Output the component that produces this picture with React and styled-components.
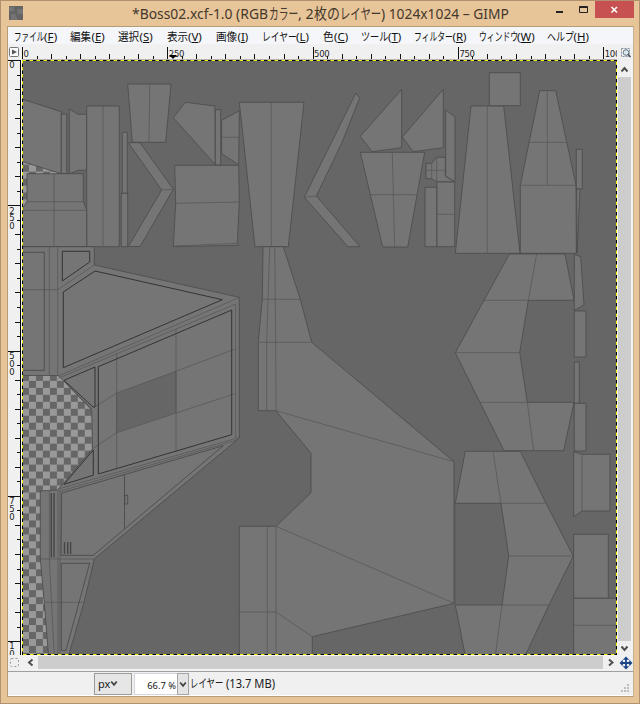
import React from "react";
import styled, { createGlobalStyle } from "styled-components";

const GlobalStyle = createGlobalStyle`
  * { box-sizing: border-box; }
  body { margin: 0; background: #e8c499; }
`;

const font = `"Noto Sans", "Noto Sans CJK JP", sans-serif`;

const Window = styled.div`
  width: 640px;
  height: 704px;
  display: flex;
  flex-direction: column;
  background: #e8c499;
  border: 1px solid #b0936e;
  padding: 0 6px 6px 6px;
  font-family: ${font};
  overflow: hidden;
`;

const TitleBar = styled.header`
  height: 25px;
  flex: none;
  display: flex;
  align-items: flex-start;
  color: #43382c;
`;

const AppIcon = styled.svg`
  width: 14px;
  height: 14px;
  margin: 5px 0 0 2px;
  flex: none;
`;

const Title = styled.h1`
  margin: 0 0 0 109px;
  width: 424px;
  height: 25px;
  flex: none;
  font-size: 15px;
  font-weight: 400;
  line-height: 25px;
  white-space: pre;
  display: flex;
`;

const SqueezeBox = styled.span`
  display: inline-block;
  width: ${(p) => p.$w}px;
  flex: none;
  white-space: pre;
`;

const SqueezeText = styled.span`
  display: inline-block;
  transform: scaleX(${(p) => p.$scale});
  transform-origin: 0 50%;
`;

function Squeeze({ w, scale, children }) {
  return (
    <SqueezeBox $w={w}>
      <SqueezeText $scale={scale}>{children}</SqueezeText>
    </SqueezeBox>
  );
}

const Controls = styled.div`
  display: flex;
  flex: none;
  height: 18px;
  margin-left: -13px;
`;

const Control = styled.button`
  border: 0;
  padding: 0;
  width: ${(p) => (p.$close ? 39 : 26)}px;
  height: ${(p) => (p.$close ? 17 : 18)}px;
  background: ${(p) => (p.$close ? "#c75050" : "transparent")};
  svg { display: block; width: 100%; height: 100%; }
`;

const Client = styled.main`
  flex: none;
  width: 627px;
  height: 671px;
  border: 1px solid #b79c78;
  border-right-color: #c9b190;
  background: #f0f0f0;
  display: flex;
  flex-direction: column;
`;

const MenuBar = styled.nav`
  height: 17px;
  flex: none;
  display: flex;
  padding-left: 6px;
  background: #f5f6f9;
  color: #111;
  font-size: 11.5px;
  line-height: 19px;
`;

const MenuItem = styled.span`
  display: flex;
  flex: none;
  width: ${(p) => p.$w}px;
  white-space: nowrap;
  u { text-underline-offset: 1px; }
`;

const Workspace = styled.section`
  flex: none;
  display: grid;
  grid-template-columns: 14px 595px 16px;
  grid-template-rows: 16px 595px 15px;
  svg { display: block; }
`;

const Drawing = styled.svg`
  width: ${(p) => p.width}px;
  height: ${(p) => p.height}px;
  text { font-family: "DejaVu Sans", sans-serif; font-size: 8.5px; fill: #222; }
`;

const ScrollBar = styled.div`
  display: flex;
  flex-direction: ${(p) => (p.$vertical ? "column" : "row")};
  padding: ${(p) => (p.$vertical ? "0 2px 0 1px" : "1px 0")};
  background: #f4f4f4;
`;

const Thumb = styled.div`
  flex: 1;
  background: #cdcdcd;
`;

const Arrow = styled.svg`
  flex: none;
  width: ${(p) => (p.$vertical ? 13 : p.$w)}px;
  height: ${(p) => (p.$vertical ? p.$w : 13)}px;
  background: #f0f0f0;
`;

const StatusBar = styled.footer`
  flex: 1;
  display: flex;
  align-items: flex-start;
  position: relative;
  margin-top: 1px;
  border-top: 1px solid #a0a0a0;
  border-bottom: 1px solid #fff;
  padding: 1px 0 0 86px;
  color: #202020;
  font-size: 12px;
`;

const UnitSelect = styled.div`
  width: 38px;
  height: 22px;
  border: 1px solid #9b9b9b;
  background: #e6e6e6;
  padding-left: 3px;
  display: flex;
  align-items: center;
  font-size: 11px;
  line-height: 18px;
  svg { margin-bottom: 1px; }
`;

const ZoomField = styled.div`
  width: 43px;
  height: 22px;
  margin-left: 2px;
  background: #fff;
  border: 1px solid #d4d7de;
  border-right: 0;
  text-align: right;
  line-height: 23px;
  font-size: 9.4px;
  padding-right: 1px;
  white-space: pre;
`;

const ZoomButton = styled.div`
  width: 12px;
  height: 22px;
  border: 1px solid #a5a5a5;
  background: #e4e4e4;
  display: flex;
  align-items: center;
  justify-content: center;
`;

const StatusText = styled.div`
  display: flex;
  margin-left: 1px;
  line-height: 21px;
`;

const Grip = styled.svg`
  position: absolute;
  right: 2px;
  bottom: 2px;
`;

const menus = [
  { kana: "ファイル", kw: 30, scale: 0.66, key: "F", w: 56 },
  { kana: "編集", kw: 21.5, scale: 0.92, key: "E", w: 48 },
  { kana: "選択", kw: 21.5, scale: 0.92, key: "S", w: 49 },
  { kana: "表示", kw: 21, scale: 0.92, key: "V", w: 49 },
  { kana: "画像", kw: 21.5, scale: 0.92, key: "I", w: 46 },
  { kana: "レイヤー", kw: 34, scale: 0.76, key: "L", w: 61 },
  { kana: "色", kw: 11, scale: 0.92, key: "C", w: 38 },
  { kana: "ツール", kw: 27, scale: 0.79, key: "T", w: 53 },
  { kana: "フィルター", kw: 38.5, scale: 0.68, key: "R", w: 65 },
  { kana: "ウィンドウ", kw: 38, scale: 0.68, key: "W", w: 68 },
  { kana: "ヘルプ", kw: 26.5, scale: 0.78, key: "H", w: 60 },
];

const STEP = 14.53;
const tickIndexes = Array.from({ length: 41 }, (_, i) => i);
const tickLength = (i) => (i % 10 === 0 ? 12 : i % 2 === 0 ? 5 : 3);

function TopRuler() {
  return (
    <Drawing width={595} height={16} viewBox="0 0 595 16">
      <rect width="595" height="16" fill="#f0f0f0" />
      <rect y="15" width="595" height="1" fill="#b5b5b5" />
      {tickIndexes.map((i) => (
        <rect key={i} x={Math.round(i * STEP)} y={15 - tickLength(i)} width="1" height={tickLength(i)} fill="#111" />
      ))}
      {["0", "250", "500", "750", "1000"].map((t, i) => (
        <text key={t} x={i * STEP * 10 + 1.5} y="12.8" letterSpacing="-0.3">{t}</text>
      ))}
      <path d="M147 11h8l-4 4z" fill="#000" />
    </Drawing>
  );
}

function LeftRuler() {
  return (
    <Drawing width={14} height={595} viewBox="0 0 14 595">
      <rect width="14" height="595" fill="#f0f0f0" />
      <rect x="12" width="1" height="595" fill="#000" />
      {tickIndexes.map((i) => (
        <rect key={i} x={12 - tickLength(i)} y={Math.round(i * STEP)} width={tickLength(i)} height="1" fill="#111" />
      ))}
      {["0", "250", "500", "750", "10"].map((t, i) => (
        <text key={t}>
          {t.split("").map((d, j) => (
            <tspan key={j} x="1.3" y={i * STEP * 10 + 8.2 + j * 7.9}>{d}</tspan>
          ))}
        </text>
      ))}
    </Drawing>
  );
}

const r = (x1, y1, x2, y2) => `${x1},${y1} ${x2},${y1} ${x2},${y2} ${x1},${y2}`;

const checkers = [
  "22,161 62,173.7 27,175 27,202 22,210",
  "22,375 60,375 92,410 92.7,449 58,490 40.5,491 40.5,559 49,656 22,656",
];

const faces = [
  "22,99 61.3,111.7 61.3,173.7 22,161.5",
  r(61.3, 114, 66.7, 173.7),
  "69.3,109 78,114.3 86.7,114.3 86.7,170.3 78,170.3 69.3,173.7",
  r(86.7, 106, 119.3, 246.7),
  "27,173.7 83.3,173.7 83.3,201.7 86.7,210 86.7,246.7 22,246.7 22,209 27,201.7",
  "127.7,84 171,84 165.7,142.3 132.3,142.3",
  r(122.3, 132.3, 127.3, 193.3),
  r(121.3, 193.3, 127.7, 246.7),
  "128.3,142.7 140,142.7 173.3,189.3 140,246.5 128.3,246.5 161.7,190",
  "173.3,117.7 185.3,102.3 215,106 215.3,164.7",
  r(215.3, 109.7, 220.7, 165),
  "239.3,110.7 221.7,120.3 221.7,153.7 238.7,164.7",
  "174.7,165.3 238.7,165.3 239.3,202 237.3,243.3 238.7,245.3 173.3,246.7 175.7,203.3",
  "239.3,102.3 304,102.3 288.3,246.7 255,246.7",
  "355.7,93.3 359.7,97.7 341.7,143.3 316.3,196 360,246.7 348,246.7 304.3,197.3",
  "360.3,136.3 401.7,89.3 401.7,147.7 372,151.7",
  "402.3,137 443.3,89.3 443.3,147.7 413.3,151.7",
  "360.3,152.3 424.7,152.3 407.7,247 382.7,247",
  "445.7,110 455,116.7 455,182 445.7,176",
  "426,163.3 431.7,163.3 436.7,157.3 445.3,157.3 445.3,176 455,182 436.7,182 431.7,178.7 426,178.7",
  r(425, 187.3, 437, 246.7),
  r(437, 182, 454.7, 246.7),
  "471,106 503.7,106 520,253.3 455.3,253.3",
  r(489.3, 72.7, 520.3, 105.7),
  "539.7,90.7 555.7,90.7 576,185.3 576.3,253.3 520.3,253.3 520.3,185.3",
  r(576.3, 149.3, 582.3, 189),
  "576.7,189 580,189 577,253.3",
  "22,246.7 94.3,246.7 94.3,265 239.3,297.3 239.3,438 94.3,559 84,602.3 68.5,656 48.5,656 44.3,602.3 40.3,559 40.3,491 57.5,490 92.7,448.7 91.7,410 58.3,375.5 22,375.5",
  "263,246.7 283.3,246.7 300.3,299.3 311.7,342.3 454,461.7 454,603.3 312.3,636.7 312.3,656 239.3,656 239.3,526.3 276,526.3 311,492.7 311,453.3 276,410.7 258.3,410.7 258.3,341.7 262.3,299.3",
  "509.3,254 565,254 574,300.3 528.3,300.3 519.7,352.7 527.3,402.3 574,402.3 563.7,450.7 504,450.7 455.3,352.7",
  "574.3,254.3 580.7,256.7 584,305 574.3,310.3",
  r(574.3, 311, 586, 357),
  r(574.3, 362, 579.3, 403.3),
  r(574.3, 403.3, 586, 451),
  "465.3,451.3 520.3,451.3 546,503.3 573.3,556 549,605 525,656 465.3,656 455.3,605 502,605 508.7,556 501,503.3 455.3,503.3",
  "573.7,451.7 582,454.3 610,454.3 610,511 582,511 573.7,516.7",
  r(573.7, 534.3, 608.3, 598.3),
  r(573.7, 598.3, 618, 656),
];

const seams = [
  "M103 106V246.7M54 174V246.7M27 201.7H83M23 210.3H86.7",
  "M149.7 84L149 142.3M161.7 190L173.3 189.3M221.7 137.3H239",
  "M175.7 203.3L239.3 202M173.3 246L237.3 243.3M271.3 102.3V246.7M304.3 197.3L316.3 196",
  "M392.3 152.3L394.7 247M370.7 194.7H417M426 170.3H445M431.7 163.3V178.7M436.7 157.3V182M437 214.3H454.7",
  "M487.3 106V253.3M529 142.3H566.7M520.3 185.3H576M547.3 90.7V185.3",
  "M49.3 247V375M57.7 247V376M23 289.7H57.7L94.3 265",
  "M58.3 376L237.3 298.3M58.3 378.3L235.7 304V438M237.3 298.3L239.3 297.3",
  "M61 378L92 409M116.7 353V469M176 329V452M176 371.3L235 349M176 413L235 393.7M94 407.5L116.7 393M92.7 448.7L116.7 432.7",
  "M58.3 489L239.3 437.5M59 491.5L237 440M40.3 559H94.3M58 490V656M60 490V656M49.3 490V559L54.3 656M44.3 602.3H84",
  "M262.3 299.3H300.3M258.3 342.3H311.7M269.7 246.7L266.7 342V410.7M274.7 246.7L275.7 342L276 410.7L454 461.7",
  "M276 526.3L454 603.3M267.3 526.3V656M276 526.3V656M239.3 612H276L312.3 636.7",
  "M536.7 254L528.3 300.3H482.3M455.3 352.7H519.7M480 402.3H527.3L533.7 450.7",
  "M493 451.3L501 503.3H546M508.7 556H573.3M549 605H502L495.3 656M455.3 503V605M582 454.3V511M573.7 625.3H618",
];

const panels = [
  "62.3,251.3 89.7,251.3 89.7,262 62.3,281",
  "63.3,292 95,271 222.3,299.7 63.3,367.7",
  "64,380.3 95,367 95,407 93,407",
  "98.3,366.7 231.7,310 231.7,434.7 98.3,474",
  "64,484.3 93.3,450 93.3,475.3",
];

const softPanels = [
  "22,252.3 44.3,252.3 44.3,370.3 22,370.3",
  "61.7,493 223.3,445.7 93.3,555.3 61,555.3",
  "61.3,563.3 89.7,563.3 66,650.3 61.3,650.3",
  r(124.7, 495.3, 127.7, 504),
];

function Canvas() {
  return (
    <Drawing width={595} height={595} viewBox="22 60 595 595">
      <defs>
        <pattern id="checks" x="22" y="60" width="13.952" height="13.952" patternUnits="userSpaceOnUse">
          <rect width="13.952" height="13.952" fill="#666" />
          <rect width="6.976" height="6.976" fill="#999" />
          <rect x="6.976" y="6.976" width="6.976" height="6.976" fill="#999" />
        </pattern>
      </defs>
      <rect x="22" y="60" width="595" height="595" fill="#666" />
      {checkers.map((p) => <polygon key={p} points={p} fill="url(#checks)" />)}
      <g fill="#757575" stroke="#4a4a4a" strokeWidth="0.8">
        {faces.map((p) => <polygon key={p} points={p} />)}
      </g>
      <polygon points="116.7,393 176,371.3 176,413 116.7,432.7" fill="#666" stroke="#555" strokeWidth="0.7" />
      <path d={seams.join("")} fill="none" stroke="#575757" strokeWidth="0.75" />
      <g fill="none" stroke="#303030" strokeWidth="0.95">
        {panels.map((p) => <polygon key={p} points={p} />)}
      </g>
      <g fill="none" stroke="#464646" strokeWidth="0.8">
        {softPanels.map((p) => <polygon key={p} points={p} />)}
        <path d="M124.5 474.5V529" />
      </g>
      <path d="M51.3 493V557.5M54 493V557.5M64.5 542V554M67.7 542V554M70.6 542V554" stroke="#454545" strokeWidth="1.4" />
      <g fill="none">
        <rect x="22.5" y="60.5" width="594" height="594" stroke="#000" />
        <rect x="22.5" y="60.5" width="594" height="594" stroke="#f4f000" strokeDasharray="3.5 3.5" />
      </g>
    </Drawing>
  );
}

const arrowPaths = {
  up: "M3.5 11.5L6.5 8L9.5 11.5",
  down: "M3.5 5.5L6.5 9L9.5 5.5",
  left: "M10.5 3.5L7 6.5L10.5 9.5",
  right: "M6 3.5L9.5 6.5L6 9.5",
};

function ScrollArrow({ dir, w }) {
  const vertical = dir === "up" || dir === "down";
  return (
    <Arrow $vertical={vertical} $w={w}>
      <path d={arrowPaths[dir]} fill="none" stroke="#505050" strokeWidth="2" />
    </Arrow>
  );
}

function Chevron() {
  return (
    <svg width="8" height="7" viewBox="0 0 8 7">
      <path d="M1.2 1.5L4 4.8L6.8 1.5" fill="none" stroke="#444" strokeWidth="1.8" />
    </svg>
  );
}

export default function App() {
  return (
    <>
      <GlobalStyle />
      <Window>
        <TitleBar>
          <AppIcon viewBox="0 0 14 14">
            <rect width="14" height="14" fill="#646464" />
            <path d="M0 1h5v4H0zM8 3h6v5H9zM2 8h4l3 6H2z" fill="#747474" />
          </AppIcon>
          <Title>
            <Squeeze w={137} scale={0.925}>*Boss02.xcf-1.0 (RGB</Squeeze>
            <Squeeze w={29} scale={0.65}>カラー</Squeeze>
            <Squeeze w={16} scale={0.95}>, 2</Squeeze>
            <Squeeze w={26} scale={0.86}>枚の</Squeeze>
            <Squeeze w={41} scale={0.69}>レイヤー</Squeeze>
            <Squeeze w={128} scale={0.92}>) 1024x1024 – GIMP</Squeeze>
          </Title>
          <Controls>
            <Control aria-label="Minimize">
              <svg viewBox="0 0 26 18"><rect x="13" y="10" width="7" height="2" fill="#222" /></svg>
            </Control>
            <Control aria-label="Maximize">
              <svg viewBox="0 0 26 18"><path d="M10.5 5.5h8v6h-8zM10 6.5h9" fill="none" stroke="#222" /></svg>
            </Control>
            <Control $close aria-label="Close">
              <svg viewBox="0 0 39 17"><path d="M16.5 6L22 11.5M22 6L16.5 11.5" stroke="#fff" strokeWidth="1.6" /></svg>
            </Control>
          </Controls>
        </TitleBar>
        <Client>
          <MenuBar>
            {menus.map((m) => (
              <MenuItem key={m.key} $w={m.w}>
                <Squeeze w={m.kw} scale={m.scale}>{m.kana}</Squeeze>
                <span>(<u>{m.key}</u>)</span>
              </MenuItem>
            ))}
          </MenuBar>
          <Workspace>
            <svg width="14" height="16" viewBox="0 0 14 16">
              <rect x="1.5" y="3.5" width="9" height="9" rx="1" fill="#fafafa" stroke="#777" />
              <path d="M4 5.5L9 8L4 10.5z" fill="#555" />
            </svg>
            <TopRuler />
            <svg width="16" height="16" viewBox="0 0 16 16">
              <rect x="4.5" y="4.5" width="8" height="8" fill="none" stroke="#8795a5" strokeDasharray="2 1" />
              <circle cx="9" cy="8.5" r="2.8" fill="#dce8f0" stroke="#667684" />
              <path d="M11 10.5L13.5 13" stroke="#445" strokeWidth="1.5" />
            </svg>
            <LeftRuler />
            <Canvas />
            <ScrollBar $vertical>
              <ScrollArrow dir="up" w={17} />
              <Thumb />
              <ScrollArrow dir="down" w={14} />
            </ScrollBar>
            <svg width="14" height="15" viewBox="0 0 14 15">
              <rect x="2.5" y="3.5" width="8" height="8" rx="1" fill="none" stroke="#999" strokeDasharray="2 2" />
            </svg>
            <ScrollBar>
              <ScrollArrow dir="left" w={16} />
              <Thumb />
              <ScrollArrow dir="right" w={14} />
            </ScrollBar>
            <svg width="16" height="15" viewBox="0 0 16 15">
              <path d="M9 3v10M4 8h10" stroke="#1c4587" strokeWidth="1.8" />
              <path d="M9 1.5l3.2 3.3H5.8zM9 14.5l3.2-3.3H5.8zM2.5 8l3.3-3.2v6.4zM15.5 8l-3.3-3.2v6.4z" fill="#1c4587" />
            </svg>
          </Workspace>
          <StatusBar>
            <UnitSelect>px<Chevron /></UnitSelect>
            <ZoomField>66.7 %</ZoomField>
            <ZoomButton><Chevron /></ZoomButton>
            <StatusText>
              <Squeeze w={33} scale={0.7}>レイヤー</Squeeze>
              <Squeeze w={54} scale={0.93}> (13.7 MB)</Squeeze>
            </StatusText>
            <Grip width="10" height="10" viewBox="0 0 10 10">
              <path d="M6 1h2v2H6zM3 4h2v2H3zM6 4h2v2H6zM0 7h2v2H0zM3 7h2v2H3zM6 7h2v2H6z" fill="#bdbdbd" />
            </Grip>
          </StatusBar>
        </Client>
      </Window>
    </>
  );
}
